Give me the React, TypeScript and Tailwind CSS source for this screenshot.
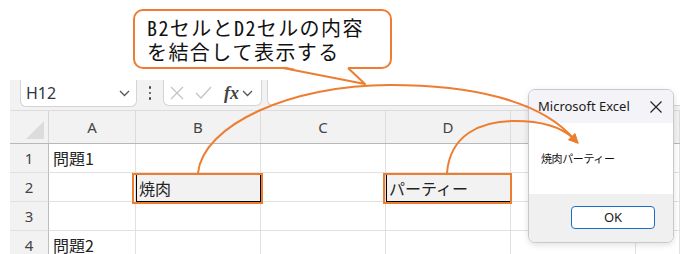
import React from "react";

const ORANGE = "#ed7d31";

function Chevron() {
  return (
    <svg width="11" height="7" viewBox="0 0 11 7">
      <path d="M1 1l4.5 4.5L10 1" fill="none" stroke="#555" strokeWidth="1.3" />
    </svg>
  );
}

const colHeads = [
  { label: "A", w: "w-[87px]" },
  { label: "B", w: "w-[125px]" },
  { label: "C", w: "w-[125px]" },
  { label: "D", w: "w-[125px]" },
  { label: "E", w: "w-[125px]" },
  { label: "", w: "w-[44px]" },
];

const rows = [
  { n: "1", cells: ["問題1", "", "", "", "", ""], sel: [] as number[] },
  { n: "2", cells: ["", "焼肉", "", "パーティー", "", ""], sel: [1, 3] },
  { n: "3", cells: ["", "", "", "", "", ""], sel: [] as number[] },
  { n: "4", cells: ["問題2", "", "", "", "", ""], sel: [] as number[] },
];

export default function App() {
  return (
    <div className="relative w-[691px] h-[254px] overflow-hidden bg-white font-['Noto_Sans','Noto_Sans_CJK_JP',sans-serif]">
      {/* sheet */}
      <div className="ml-[10px] mt-[80px] w-[670px] bg-[#f2f2f2]">
        {/* name box / formula bar */}
        <div className="flex h-[30px] items-start">
          <div className="ml-[10px] flex h-[27px] w-[117px] items-center justify-between rounded-b-[6px] border border-t-0 border-[#d4d4d4] bg-white pl-[5px] pr-[6px]">
            <span className="text-[16px] leading-none text-[#2f3640]">H12</span>
            <Chevron />
          </div>
          <div className="flex h-[26px] w-[26px] flex-col items-center justify-center gap-[3px]">
            <span className="h-[2.5px] w-[2.5px] rounded-full bg-[#444]" />
            <span className="h-[2.5px] w-[2.5px] rounded-full bg-[#444]" />
            <span className="h-[2.5px] w-[2.5px] rounded-full bg-[#444]" />
          </div>
          <div className="flex h-[26px] w-[99px] items-center rounded-b-[6px] border border-t-0 border-[#d4d4d4] bg-white pl-[5px]">
            <svg width="14" height="14" viewBox="0 0 14 14" className="ml-[1px]">
              <path d="M1 1l12 12M13 1L1 13" stroke="#c4c4c4" strokeWidth="1.3" />
            </svg>
            <svg width="17" height="13" viewBox="0 0 17 13" className="ml-[11px]">
              <path d="M1 7l5 5L16 1" fill="none" stroke="#c4c4c4" strokeWidth="1.3" />
            </svg>
            <span className="ml-[12px] font-['Liberation_Serif',serif] text-[18px] font-bold italic leading-none text-[#444]">
              fx
            </span>
            <span className="ml-[3px] mt-[2px]">
              <Chevron />
            </span>
          </div>
          <div className="ml-[5px] h-[26px] flex-1 rounded-bl-[6px] border border-t-0 border-r-0 border-[#d4d4d4] bg-white" />
        </div>

        {/* column headers */}
        <div className="flex h-[34px] border-y border-t-[#dcdcdc] border-b-[#b8b8b8] bg-[#f2f2f2]">
          <div className="flex w-[39px] items-end justify-end border-r border-[#d6d6d6] pb-[4px] pr-[4px]">
            <svg width="18" height="18" viewBox="0 0 18 18">
              <path d="M18 0L18 18L0 18Z" fill="#dcdcdc" />
            </svg>
          </div>
          {colHeads.map((c, i) => (
            <div
              key={i}
              className={`${c.w} flex items-center justify-center border-r border-[#dcdcdc] text-[15px] text-[#444]`}
            >
              {c.label}
            </div>
          ))}
        </div>

        {/* rows */}
        {rows.map((r) => (
          <div key={r.n} className="flex h-[29px]">
            <div className="flex w-[39px] items-center justify-center border-r border-b border-r-[#bdbdbd] border-b-[#e1e1e1] text-[15px] text-[#444]">
              {r.n}
            </div>
            {colHeads.map((c, i) =>
              r.sel.includes(i) ? (
                <div
                  key={i}
                  className={`${c.w} flex items-center border border-black bg-[#f2f2f2] pl-[2px] font-['Noto_Sans_CJK_JP',sans-serif] text-[16px] text-[#222]`}
                >
                  {r.cells[i]}
                </div>
              ) : (
                <div
                  key={i}
                  className={`${c.w} flex items-center border-r border-b border-[#e1e1e1] bg-white pl-[4px] font-['Noto_Sans_CJK_JP',sans-serif] text-[16px] text-[#222]`}
                >
                  {r.cells[i]}
                </div>
              )
            )}
          </div>
        ))}
      </div>

      {/* callout */}
      <div className="absolute left-[133px] top-[9px] h-[60px] w-[259px] rounded-[10px] border-2 border-[#ed7d31] bg-white pl-[12px] pt-[5px] font-['Noto_Sans_Mono_CJK_JP','Noto_Sans_CJK_JP',monospace] text-[20px] leading-[24px] tracking-[1.4px] text-[#111]">
        <div>B2セルとD2セルの内容</div>
        <div>を結合して表示する</div>
      </div>

      {/* message box */}
      <div className="absolute left-[528px] top-[89px] flex h-[154px] w-[146px] flex-col overflow-hidden rounded-[7px] border border-[#c9c9c9] bg-white shadow-[0_2px_6px_rgba(0,0,0,0.12)]">
        <div className="flex h-[33px] items-center justify-between bg-[#f4f4f8] pl-[9px] pr-[11px]">
          <span className="font-['Noto_Sans',sans-serif] text-[13px] text-[#1b1b1b]">Microsoft Excel</span>
          <svg width="12" height="12" viewBox="0 0 12 12">
            <path d="M0.5 0.5l11 11M11.5 0.5l-11 11" stroke="#222" strokeWidth="1.2" />
          </svg>
        </div>
        <div className="flex h-[71px] items-center pl-[12px] font-['Noto_Sans_CJK_JP',sans-serif] text-[11px] tracking-[-0.4px] text-[#111]">
          焼肉パーティー
        </div>
        <div className="flex flex-1 justify-end bg-[#f0f0f0] pr-[18px] pt-[12px]">
          <div className="flex h-[23px] w-[84px] items-center justify-center rounded-[4px] border-[1.5px] border-[#1a6fc4] bg-white font-['Noto_Sans',sans-serif] text-[13px] text-[#1b1b1b]">
            OK
          </div>
        </div>
      </div>

      {/* annotation lines */}
      <svg className="pointer-events-none absolute inset-0" width="691" height="254" viewBox="0 0 691 254">
        <defs>
          <marker id="ah" viewBox="0 0 10 10" refX="2" refY="5" markerUnits="userSpaceOnUse" markerWidth="11" markerHeight="10" orient="auto">
            <path d="M0 0L10 5L0 10z" fill={ORANGE} />
          </marker>
        </defs>
        <polygon points="284,66.5 365,84 347,66.5" fill="white" />
        <polyline points="283,68 365,84 348,68" fill="none" stroke={ORANGE} strokeWidth="2" strokeLinejoin="round" />
        <rect x="133" y="174" width="129" height="29" fill="none" stroke={ORANGE} strokeWidth="2" />
        <rect x="384" y="174" width="127" height="29" fill="none" stroke={ORANGE} strokeWidth="2" />
        <path d="M198 173C203 125 290 85 390 85C470 85 540 100 573 138" fill="none" stroke={ORANGE} strokeWidth="2" markerEnd="url(#ah)" />
        <path d="M447 173C450 135 480 121 515 121C545 121 562 128 573 138" fill="none" stroke={ORANGE} strokeWidth="2" markerEnd="url(#ah)" />
      </svg>
    </div>
  );
}
